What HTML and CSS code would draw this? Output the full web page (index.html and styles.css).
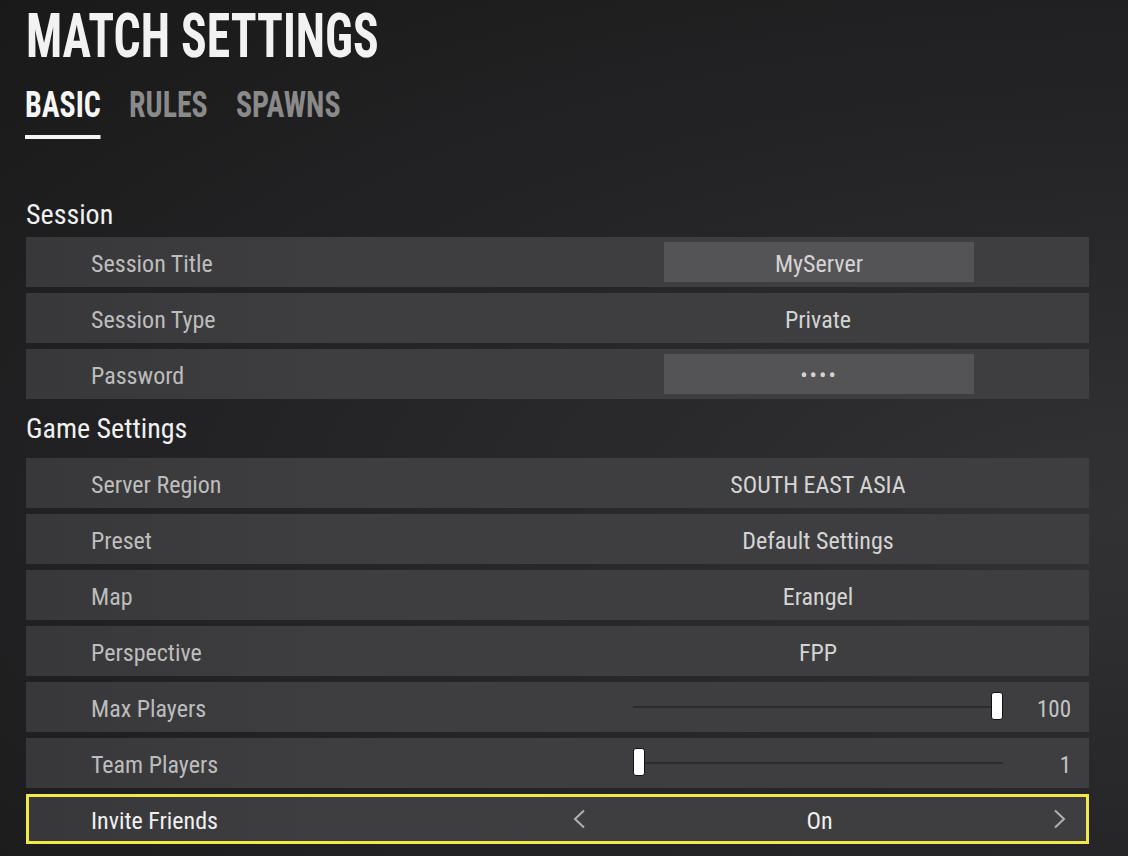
FILE: index.html
```html
<!DOCTYPE html>
<html lang="en">

<head>
    <meta charset="UTF-8">
    <meta name="viewport" content="width=device-width, initial-scale=1.0">
    <title>Match Settings</title>
    <link rel="stylesheet" href="styles.css">
</head>

<body>
    <div class="page">
        <h1 class="title">MATCH SETTINGS</h1>
        <nav class="tabs">
            <span class="tab active">BASIC</span>
            <span class="tab">RULES</span>
            <span class="tab">SPAWNS</span>
        </nav>

        <h2 class="group">Session</h2>
        <div class="row">
            <span class="label">Session Title</span>
            <div class="value boxed"><span class="input">MyServer</span></div>
        </div>
        <div class="row">
            <span class="label">Session Type</span>
            <div class="value">Private</div>
        </div>
        <div class="row">
            <span class="label">Password</span>
            <div class="value boxed"><span class="input dots">&bull;&bull;&bull;&bull;</span></div>
        </div>

        <h2 class="group">Game Settings</h2>
        <div class="row">
            <span class="label">Server Region</span>
            <div class="value">SOUTH EAST ASIA</div>
        </div>
        <div class="row">
            <span class="label">Preset</span>
            <div class="value">Default Settings</div>
        </div>
        <div class="row">
            <span class="label">Map</span>
            <div class="value">Erangel</div>
        </div>
        <div class="row">
            <span class="label">Perspective</span>
            <div class="value">FPP</div>
        </div>
        <div class="row">
            <span class="label">Max Players</span>
            <div class="value track">
                <div class="slider max"><span class="thumb" style="left: 100%"></span></div>
            </div>
            <span class="num">100</span>
        </div>
        <div class="row">
            <span class="label">Team Players</span>
            <div class="value track">
                <div class="slider min"><span class="thumb" style="left: 0%"></span></div>
            </div>
            <span class="num">1</span>
        </div>
        <div class="row select focused">
            <span class="label">Invite Friends</span>
            <div class="chooser">
                <svg class="chev" width="12" height="20" viewBox="0 0 12 20">
                    <path d="M11 1.5 L2 10 L11 18.5" fill="none" stroke="#b0b0b0" stroke-width="2" />
                </svg>
                <span class="choice">On</span>
                <svg class="chev" width="12" height="20" viewBox="0 0 12 20">
                    <path d="M1 1.5 L10 10 L1 18.5" fill="none" stroke="#b0b0b0" stroke-width="2" />
                </svg>
            </div>
        </div>
    </div>
</body>

</html>
```

FILE: styles.css
```css
html,
body {
    margin: 0;
    height: 100%;
}

body {
    background: radial-gradient(ellipse at 100% 60%, #323234 0%, #262628 45%, #19191a 100%);
    background-color: #222;
    font-family: "Roboto Condensed", "DejaVu Sans Condensed", Roboto, sans-serif;
    color: #c4c4c4;
    overflow: hidden;
}

.page {
    padding: 0 39px 0 26px;
}

/* heading font is narrower than roboto condensed, squeeze it */
.title {
    margin: 0;
    padding-top: 1px;
    font-size: 62px;
    line-height: 70px;
    font-weight: 700;
    color: #f2f2f2;
    transform: scaleX(0.77);
    transform-origin: left center;
    white-space: nowrap;
}

.tabs {
    display: flex;
    gap: 34px;
    margin-top: 14px;
    margin-left: -1px;
    transform: scaleX(0.83);
    transform-origin: left center;
}

.tab {
    font-size: 36px;
    font-weight: 700;
    line-height: 40px;
    color: #8a8a8a;
    padding-bottom: 10px;
}

.tab.active {
    color: #f5f5f5;
    border-bottom: 4px solid #f5f5f5;
}

.group {
    margin: 0;
    font-size: 28px;
    font-weight: 400;
    color: #f0f0f0;
    line-height: 34px;
}

.tabs + .group {
    margin-top: 59px;
    margin-bottom: 5px;
}

.row + .group {
    margin-top: 13px;
    margin-bottom: 12px;
}

.row {
    display: grid;
    grid-template-columns: 607px 370px 1fr;
    align-items: center;
    height: 50px;
    margin-bottom: 6px;
    background: linear-gradient(90deg, #38383a 0%, #3e3e40 30%, #3e3e40 100%);
    box-sizing: border-box;
}

.label,
.value,
.num,
.choice {
    padding-top: 4px;
}

.label {
    padding-left: 65px;
    font-size: 24px;
    color: #bdbdbd;
}

.value {
    display: flex;
    justify-content: center;
    align-items: center;
    font-size: 24px;
    color: #d4d4d4;
}

.value.boxed,
.value.track {
    padding-top: 0;
}

.input {
    display: flex;
    align-items: center;
    justify-content: center;
    box-sizing: border-box;
    width: 310px;
    height: 40px;
    padding-top: 3px;
    background: #545456;
    margin-left: 2px;
}

.dots {
    font-size: 22px;
    letter-spacing: 2px;
}

.slider {
    position: relative;
    width: 370px;
    height: 2px;
    background: #2c2c2e;
}

.thumb {
    position: absolute;
    top: -14px;
    width: 10px;
    height: 26px;
    background: #fff;
    border: 1px solid #111;
    border-radius: 3px;
}

.slider.max .thumb {
    margin-left: -12px;
}

.num {
    text-align: right;
    padding-right: 18px;
    font-size: 23px;
    color: #c4c4c4;
}

.row.select {
    grid-template-columns: 544px 493px 1fr;
}

.focused {
    border: 3px solid #f2e84a;
}

.focused .label {
    padding-left: 62px;
    color: #f0f0f0;
}

.chooser {
    display: flex;
    justify-content: space-between;
    align-items: center;
}

.choice {
    font-size: 24px;
    color: #f0f0f0;
}
```
